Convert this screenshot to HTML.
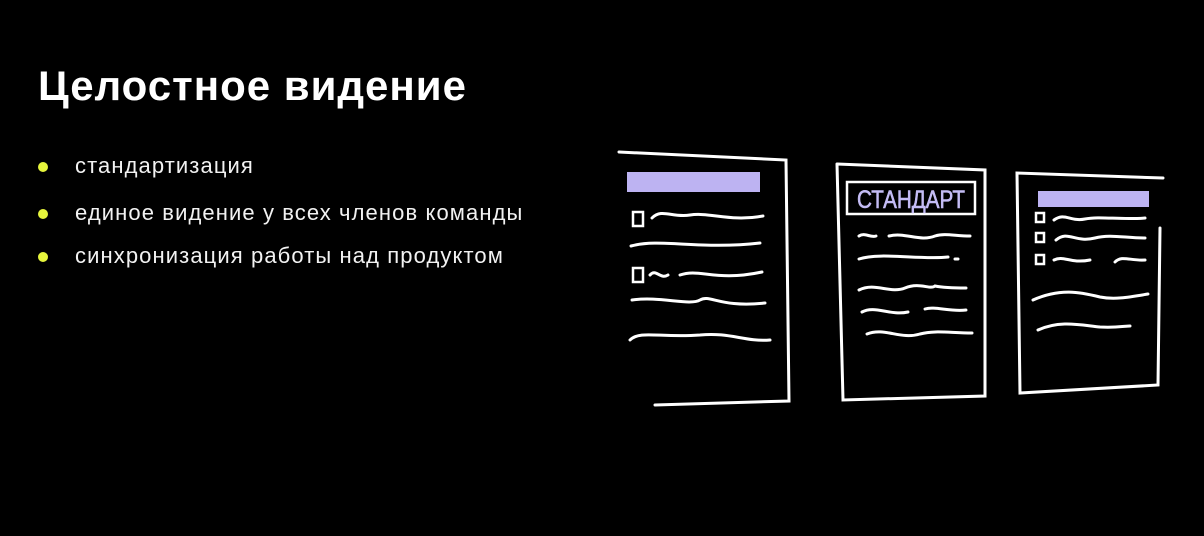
<!DOCTYPE html>
<html><head><meta charset="utf-8"><style>
html,body{margin:0;padding:0;background:#000;width:1204px;height:536px;overflow:hidden;position:relative;font-family:"Liberation Sans","DejaVu Sans",sans-serif;color:#fff}
h1{position:absolute;left:38px;top:60px;margin:0;font-size:42px;font-weight:bold;letter-spacing:1px;line-height:52px}
.b{position:absolute;left:75px;font-size:22px;letter-spacing:1.1px;line-height:24px;color:#f2f2f2}
.b:before{content:"";position:absolute;left:-37px;top:8px;width:10px;height:10px;border-radius:50%;background:#e6f53c}
svg{position:absolute;left:0;top:0}
</style></head><body>
<h1>Целостное видение</h1>
<div class="b" style="top:154px">стандартизация</div>
<div class="b" style="top:201px">единое видение у всех членов команды</div>
<div class="b" style="top:244px">синхронизация работы над продуктом</div>
<svg width="1204" height="536" viewBox="0 0 1204 536" fill="none" stroke="#fff" stroke-width="3" stroke-linecap="round">
<path d="M619 152 L786 160 L789 401 L655 405"/>
<rect x="627" y="172" width="133" height="20" fill="#bdb3f2" stroke="none"/>
<rect x="633" y="212" width="10" height="14" stroke-width="2.5"/>
<path d="M652 218 C662 208 672 218 690 215 C710 212 730 222 763 216"/>
<path d="M631 246 C660 238 700 250 760 243"/>
<rect x="633" y="268" width="10" height="14" stroke-width="2.5"/>
<path d="M650 275 C656 268 660 280 668 275 M680 275 C700 268 715 282 762 272"/>
<path d="M632 300 C660 296 690 306 700 300 C710 294 720 308 765 303"/>
<path d="M630 340 C640 330 660 338 700 335 C730 332 745 342 770 340"/>
<path d="M837 164 L985 170 L985 396 L843 400 L837 164"/>
<rect x="847" y="182" width="128" height="32" stroke-width="2.5"/>
<text x="857" y="208" fill="#c4bcf5" stroke="#c4bcf5" stroke-width="0.6" font-family="Liberation Sans Narrow, Liberation Sans, sans-serif" font-size="25" textLength="108" lengthAdjust="spacingAndGlyphs">СТАНДАРТ</text>
<path d="M859 236 C865 232 870 238 876 236 M889 236 C905 232 920 242 935 236 C945 233 955 236 970 236"/>
<path d="M859 259 C880 252 920 260 948 257 M955 259 L958 259"/>
<path d="M859 290 C875 282 890 294 905 288 C920 282 930 290 935 286 C945 288 960 288 966 288"/>
<path d="M862 312 C875 305 890 316 908 312 M925 309 C935 306 950 312 966 310"/>
<path d="M867 334 C885 327 900 340 920 334 C935 330 950 333 972 333"/>
<path d="M1163 178 L1017 173 L1020 393 L1158 385 L1160 228"/>
<rect x="1038" y="191" width="111" height="16" fill="#bdb3f2" stroke="none"/>
<rect x="1036" y="213" width="8" height="9" stroke-width="2.5"/>
<rect x="1036" y="233" width="8" height="9" stroke-width="2.5"/>
<rect x="1036" y="255" width="8" height="9" stroke-width="2.5"/>
<path d="M1054 220 C1065 212 1070 222 1085 219 C1100 216 1120 220 1145 218"/>
<path d="M1056 240 C1068 230 1075 243 1095 238 C1110 234 1125 238 1145 238"/>
<path d="M1054 260 C1064 255 1070 264 1090 260 M1115 262 C1122 255 1130 261 1145 260"/>
<path d="M1033 300 C1060 288 1080 292 1100 297 C1115 300 1130 297 1148 294"/>
<path d="M1038 330 C1060 320 1080 325 1100 327 C1115 328 1125 326 1130 326"/>
</svg>
</body></html>
